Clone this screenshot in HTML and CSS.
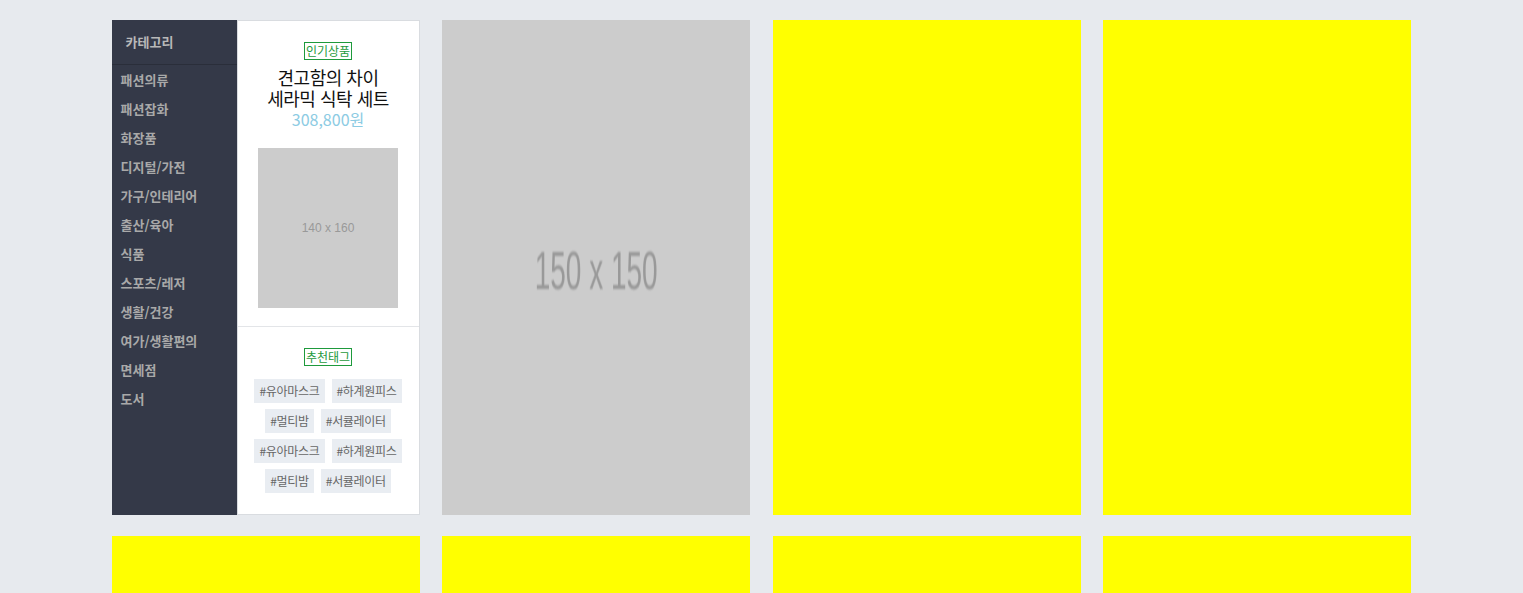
FILE: index.html
```html
<!DOCTYPE html>
<html lang="ko">
<head>
    <meta charset="UTF-8">
    <meta name="viewport" content="width=device-width, initial-scale=1.0">
    <title>쇼핑 메인</title>
    <link rel="stylesheet" href="styles.css">
</head>
<body>
    <div class="container">
        <!-- 첫번째 줄 -->
        <div class="grid">
            <!-- 카테고리 + 인기상품 카드 -->
            <div class="card card-main">
                <div class="category">
                    <div class="category-title">카테고리</div>
                    <ul class="category-list">
                        <li>패션의류</li>
                        <li>패션잡화</li>
                        <li>화장품</li>
                        <li>디지털/가전</li>
                        <li>가구/인테리어</li>
                        <li>출산/육아</li>
                        <li>식품</li>
                        <li>스포츠/레저</li>
                        <li>생활/건강</li>
                        <li>여가/생활편의</li>
                        <li>면세점</li>
                        <li>도서</li>
                    </ul>
                </div>
                <div class="side-panel">
                    <div class="best">
                        <span class="label">인기상품</span>
                        <p class="best-title">견고함의 차이<br>세라믹 식탁 세트</p>
                        <p class="best-price">308,800원</p>
                        <div class="thumb">140 x 160</div>
                    </div>
                    <div class="tags">
                        <span class="label">추천태그</span>
                        <div class="tag-list">
                            <a class="tag">#유아마스크</a>
                            <a class="tag">#하계원피스</a>
                            <a class="tag">#멀티밤</a>
                            <a class="tag">#서큘레이터</a>
                            <a class="tag">#유아마스크</a>
                            <a class="tag">#하계원피스</a>
                            <a class="tag">#멀티밤</a>
                            <a class="tag">#서큘레이터</a>
                        </div>
                    </div>
                </div>
            </div>

            <!-- 배너 -->
            <div class="card card-banner">
                <span class="banner-text">150 x 150</span>
            </div>
            <div class="card card-yellow"></div>
            <div class="card card-yellow"></div>

            <!-- 두번째 줄 -->
            <div class="card card-yellow"></div>
            <div class="card card-yellow"></div>
            <div class="card card-yellow"></div>
            <div class="card card-yellow"></div>
        </div>
    </div>
</body>
</html>
```

FILE: styles.css
```css
body {
    margin: 0;
    background-color: #e7eaee;
    font-family: 'Noto Sans CJK KR', 'Noto Sans', sans-serif;
    color: #333;
}

.container {
    width: 1300px;
    margin: 0 auto;
    padding-top: 20px;
}

.grid {
    display: grid;
    grid-template-columns: repeat(4, 308px);
    grid-auto-rows: 495px;
    justify-content: space-between;
    row-gap: 21px;
}

.card {
    box-sizing: border-box;
}

.card-yellow {
    background-color: #ffff00;
}

/* 150 x 150 배너 */
.card-banner {
    background-color: #cccccc;
    display: flex;
    align-items: center;
    justify-content: center;
    overflow: hidden;
}

.banner-text {
    font-family: 'Liberation Sans', Arial, sans-serif;
    font-size: 28px;
    color: #999;
    transform: scale(1, 1.9);
    filter: blur(0.6px);
    margin-top: 8px;
}

/* 카테고리 + 인기상품 */
.card-main {
    display: flex;
}

.category {
    width: 125px;
    background-color: #343948;
}

.category-title {
    height: 44px;
    line-height: 44px;
    padding-left: 14px;
    font-size: 13px;
    font-weight: bold;
    color: #b8b8b8;
    border-bottom: 1px solid #2a2e3a;
}

.category-list {
    list-style: none;
    margin: 0;
    padding: 0 0 0 9px;
}

.category-list li {
    line-height: 29px;
    font-size: 13px;
    font-weight: bold;
    color: #a9a9a9;
    white-space: nowrap;
}

.side-panel {
    flex: 1;
    background-color: #fff;
    border: 1px solid #d9dce0;
    display: flex;
    flex-direction: column;
}

.label {
    display: block;
    width: fit-content;
    margin: 0 auto;
    font-size: 12px;
    line-height: 16px;
    padding: 0 1px;
    color: #1e9a3c;
    border: 1px solid #1e9a3c;
}

.best {
    text-align: center;
    padding: 21px 0 18px;
    border-bottom: 1px solid #e3e5e8;
}

.best-title {
    margin: 7px 0 0;
    font-size: 18px;
    line-height: 21px;
    color: #111;
    letter-spacing: -0.5px;
}

.best-price {
    margin: 0;
    font-size: 16px;
    line-height: 20px;
    color: #8ccbe3;
}

.thumb {
    width: 140px;
    height: 160px;
    margin: 19px auto 0;
    background-color: #cccccc;
    display: flex;
    align-items: center;
    justify-content: center;
    font-family: 'Liberation Sans', Arial, sans-serif;
    font-size: 12px;
    color: #999;
}

.tags {
    text-align: center;
    padding-top: 21px;
}

.tag-list {
    display: flex;
    flex-wrap: wrap;
    justify-content: center;
    gap: 6px 7px;
    margin-top: 13px;
    padding: 0 8px;
}

.tag {
    height: 24px;
    line-height: 24px;
    padding: 0 5px;
    background-color: #e9edf2;
    font-size: 12px;
    color: #666;
    letter-spacing: -0.3px;
}
```
